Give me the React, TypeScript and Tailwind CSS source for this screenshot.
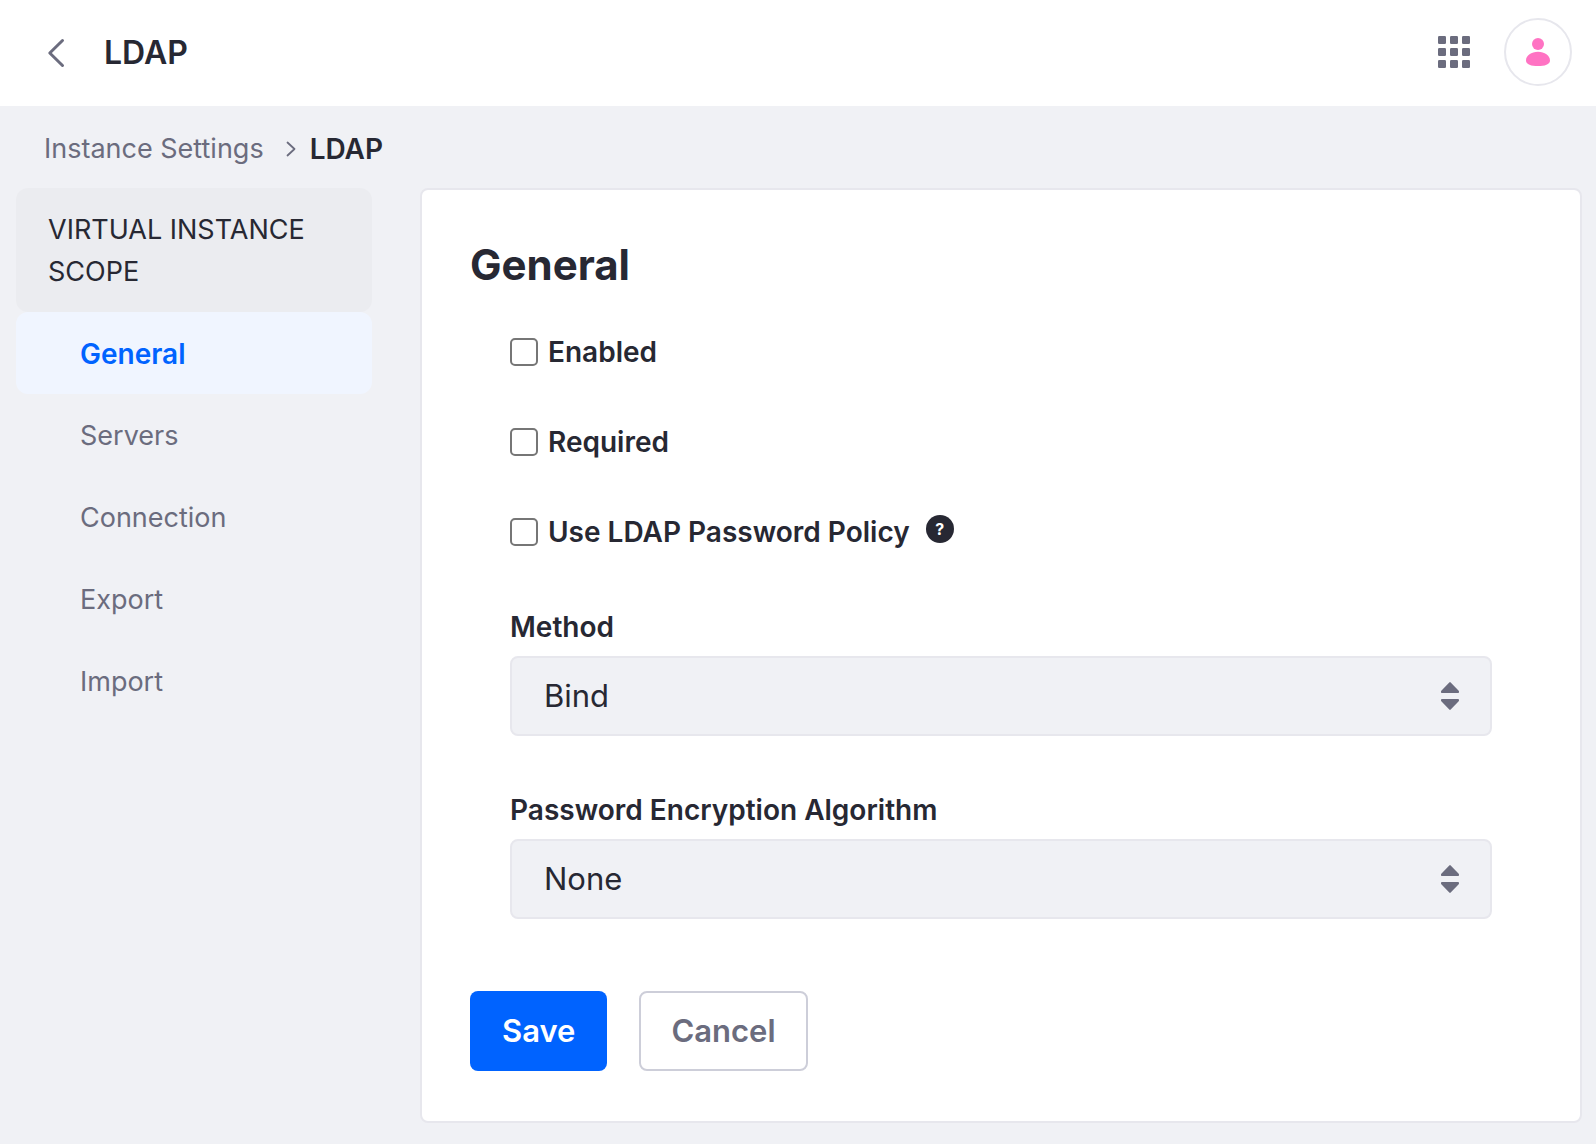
import { useState } from "react";

const navItems = ["General", "Servers", "Connection", "Export", "Import"];

const checks = [
  { id: "enabled", label: "Enabled" },
  { id: "required", label: "Required" },
  { id: "password-policy", label: "Use LDAP Password Policy", help: true },
];

const selects = [
  { id: "method", label: "Method", options: ["Bind", "Password Compare"] },
  { id: "algorithm", label: "Password Encryption Algorithm", options: ["None", "BCRYPT", "MD5", "SHA"] },
];

function Header() {
  return (
    <header className="flex h-[106px] items-center bg-white pr-6 pl-10">
      <button type="button" aria-label="Back" className="flex h-12 w-8 items-center justify-center">
        <svg width="18" height="30" viewBox="0 0 18 30" fill="none" stroke="#6b6c7e" strokeWidth="3" strokeLinecap="round" strokeLinejoin="round">
          <path d="M15.5 2.5 2.8 15l12.7 12.5" />
        </svg>
      </button>
      <h1 className="ml-8 grow text-[32px] leading-[48px] font-semibold">LDAP</h1>
      <div className="flex items-center gap-[34px] pb-0.5">
        <button type="button" aria-label="Applications">
          <svg width="32" height="32" viewBox="0 0 32 32" fill="#6b6c7e">
            {[0, 12, 24].map((y) => [0, 12, 24].map((x) => <rect key={`${x}-${y}`} x={x} y={y} width="8" height="8" rx="1.3" />))}
          </svg>
        </button>
        <button type="button" aria-label="User profile" className="flex size-[68px] items-center justify-center rounded-full border-2 border-[#e7e7ed]">
          <svg width="24" height="28" viewBox="0 0 24 28" fill="#ff73c3">
            <circle cx="12" cy="6" r="6" />
            <path d="M12 13.8c6.6 0 12 3.6 12 8.6 0 4-5.4 5.6-12 5.6S0 26.4 0 22.4c0-5 5.4-8.6 12-8.6Z" />
          </svg>
        </button>
      </div>
    </header>
  );
}

export default function App() {
  const [active, setActive] = useState("General");
  return (
    <div className="min-h-screen bg-[#f0f1f5] font-[Inter,sans-serif] text-[27px] leading-[42px] text-[#272833]">
      <Header />
      <nav aria-label="Breadcrumb" className="flex items-center px-11 pt-[22px] pb-[18px]">
        <a href="#instance-settings" className="text-[#6b6c7e]">Instance Settings</a>
        <svg className="mr-[14px] ml-[22px]" width="10" height="16" viewBox="0 0 10 16" fill="none" stroke="#6b6c7e" strokeWidth="1.8" strokeLinecap="round" strokeLinejoin="round">
          <path d="m1.500 1.500 7 6.500-7 6.500" />
        </svg>
        <span className="text-[28px] font-semibold" aria-current="page">LDAP</span>
      </nav>
      <div className="flex items-start gap-12 pr-[14px] pb-5 pl-4">
        <aside className="w-[356px] shrink-0">
          <h2 className="rounded-xl bg-[#ebecf0] px-8 pt-[21px] pb-[19px] uppercase">Virtual Instance Scope</h2>
          <ul>
            {navItems.map((item) => (
              <li key={item}>
                <a
                  href={`#${item.toLowerCase()}`}
                  onClick={() => setActive(item)}
                  className={
                    item === active
                      ? "block rounded-xl bg-[#f0f5ff] pt-[21px] pb-[19px] pl-16 text-[28px] font-semibold text-[#0063ff]"
                      : "block rounded-xl pt-[21px] pb-[19px] pl-16 text-[#6b6c7e]"
                  }
                >
                  {item}
                </a>
              </li>
            ))}
          </ul>
        </aside>
        <main className="min-w-0 grow rounded-lg border-2 border-[#e7e7ed] bg-white px-12 pt-12 pb-[50px]">
          <h2 className="text-[42px] leading-[54px] font-bold">General</h2>
          <form onSubmit={(e) => e.preventDefault()}>
            <div className="mt-[39px] px-10">
              <div className="flex flex-col gap-12">
                {checks.map((c) => (
                  <div key={c.id} className="flex items-center">
                    <input id={c.id} type="checkbox" className="size-7 appearance-none rounded-[5px] border-2 border-[#767676] bg-white checked:bg-[#0063ff]" />
                    <label htmlFor={c.id} className="pl-[10px] text-[28px] font-semibold">{c.label}</label>
                    {c.help && (
                      <button type="button" aria-label="Help" className="mb-1.5 ml-4 flex size-7 items-center justify-center rounded-full bg-[#272833] text-base leading-7 font-bold text-white">
                        ?
                      </button>
                    )}
                  </div>
                ))}
              </div>
              {selects.map((s) => (
                <div key={s.id} className="mt-[53px]">
                  <label htmlFor={s.id} className="mb-2 block text-[28px] font-semibold">{s.label}</label>
                  <div className="relative">
                    <select id={s.id} className="block h-20 w-full appearance-none rounded-lg border-2 border-[#e7e7ed] bg-[#f0f1f5] px-8 text-[31px] leading-[48px]">
                      {s.options.map((o) => <option key={o}>{o}</option>)}
                    </select>
                    <svg className="pointer-events-none absolute inset-y-0 right-8 my-auto" width="20" height="28" viewBox="0 0 20 28" fill="#6b6c7e">
                      <path d="M9.300.4a1 1 0 0 1 1.400 0l8 8.300c.6.800.3 2.300-.6 2.300H1.900c-.9 0-1.200-1.500-.6-2.300ZM1.900 17h16.200c.9 0 1.200 1.500.6 2.300l-8 8.300a1 1 0 0 1-1.400 0l-8-8.300C.7 18.500 1 17 1.900 17Z" />
                    </svg>
                  </div>
                </div>
              ))}
            </div>
            <div className="mt-[72px] flex gap-8 text-[31px] leading-[48px] font-semibold">
              <button type="submit" className="h-20 rounded-lg bg-[#0063ff] px-8 text-white">Save</button>
              <button type="button" className="h-20 rounded-lg border-2 border-[#cdced9] px-[30px] text-[#6b6c7e]">Cancel</button>
            </div>
          </form>
        </main>
      </div>
    </div>
  );
}
